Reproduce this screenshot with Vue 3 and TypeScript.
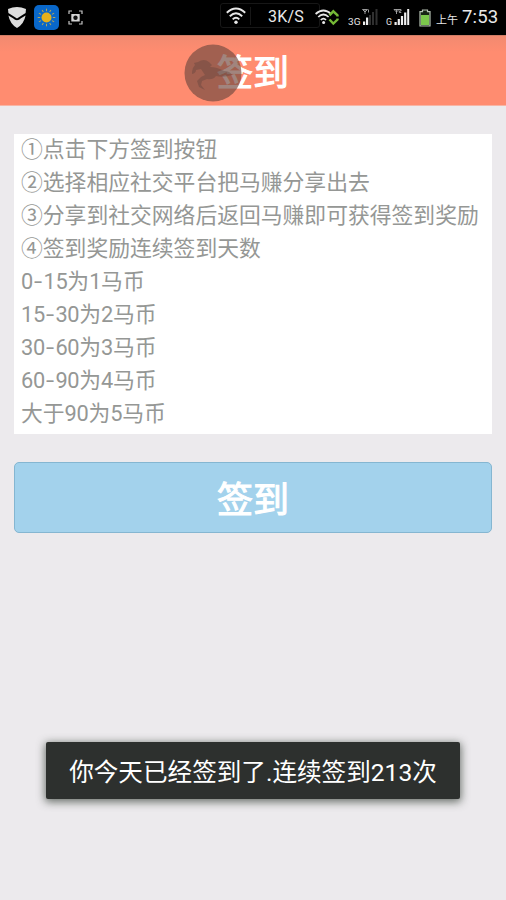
<script setup lang="ts">
const rules: string[] = [
  '①点击下方签到按钮',
  '②选择相应社交平台把马赚分享出去',
  '③分享到社交网络后返回马赚即可获得签到奖励',
  '④签到奖励连续签到天数',
  '0-15为1马币',
  '15-30为2马币',
  '30-60为3马币',
  '60-90为4马币',
  '大于90为5马币',
]
interface Part {
  text: string
  kind: string
}
const lines: Part[][] = rules.map((rule) =>
  rule
    .split(/(-|\d+)/)
    .filter((text) => text !== '')
    .map((text) => ({ text, kind: text === '-' ? 'dash' : /^\d/.test(text) ? 'num' : 'han' })),
)
const rays: number[] = Array.from({ length: 12 }, (_, i) => i * 30)
</script>

<template>
  <div class="screen">
    <div class="status">
      <svg class="shield" width="20" height="24" viewBox="0 0 20 24">
        <path d="M1 3Q10-1 19 3L18.600 7L10 12.500L1.400 7Z" fill="#dedede" />
        <path d="M1.400 9.500L6 12.200Q10 16.500 14 12.200L18.600 9.500Q17 18 10 22Q3 18 1.400 9.500Z" fill="#dedede" />
      </svg>
      <svg class="sun" width="25" height="25" viewBox="0 0 25 25">
        <rect width="25" height="25" rx="5" fill="#0967c9" />
        <g stroke="#b5a556" stroke-width="1">
          <line v-for="r in rays" :key="r" x1="12.500" y1="3.700" x2="12.500" y2="6.200" :transform="`rotate(${r} 12.500 12.500)`" />
        </g>
        <circle cx="12.500" cy="12.500" r="5" fill="#e5b01c" />
      </svg>
      <svg class="capture" width="15" height="15" viewBox="0 0 15 15" fill="none" stroke="#c5c5c5">
        <path d="M1 4V1H4M11 1H14V4M14 11V14H11M4 14H1V11" stroke-width="1.200" />
        <path d="M3.300 4H11.700V11.500H3.300Z" fill="#d5d5d5" stroke="none" />
        <circle cx="7.500" cy="7.700" r="2.200" fill="#111" stroke="none" />
      </svg>
      <div class="speed">
        <div class="speed-icon">
          <svg width="20" height="18" viewBox="0 0 20 18" fill="none" stroke="#e8e8e8" stroke-width="1.900">
            <path d="M.8 5.800Q10-2.600 19.200 5.800M3.800 9.300Q10 3.400 16.200 9.300M6.700 12.400Q10 9 13.300 12.400" />
            <circle cx="10" cy="15.300" r="1.700" fill="#e8e8e8" stroke="none" />
          </svg>
        </div>
        <span class="speed-text">3K/S</span>
      </div>
      <svg class="wifi" width="24" height="17" viewBox="0 0 24 17" fill="none">
        <path d="M.6 5Q8.500-2 16 5M3.200 8Q8.500 3 13.600 8M5.800 11Q8.500 8.300 11 11" stroke="#e8e8e8" stroke-width="1.700" />
        <circle cx="8.600" cy="13.600" r="1.500" fill="#e8e8e8" />
        <path d="M14.500 6.300L18.300 2.300L22.500 6.300V7.500M14.500 10.500L18.300 14.500L22.500 10.500V9.500" stroke="#75ba36" stroke-width="2.400" />
      </svg>
      <svg class="sig sig-a" width="30" height="18" viewBox="0 0 30 18">
        <text x="0" y="17" class="net" textLength="12.500" lengthAdjust="spacingAndGlyphs">3G</text>
        <path d="M14.500 1.500H19.500L17 4ZM17 1.500V6M20.500 1.500V4.500" class="ant" />
        <path d="M15 13.500h2.200V17H15ZM18 9.500h2.200V17H18Z" fill="#eee" />
        <path d="M21 7h2V17h-2ZM24 4h2V17h-2ZM27.500 1h2V17h-2Z" fill="#303030" />
      </svg>
      <svg class="sig sig-b" width="24" height="18" viewBox="0 0 24 18">
        <text x="0" y="17" class="net" textLength="6" lengthAdjust="spacingAndGlyphs">G</text>
        <path d="M8 1.500H13L10.500 4ZM10.500 1.500V6M13 1.500H15V3H13.300V4.500H15.300" class="ant" />
        <path d="M8.500 14h2.200V17H8.500ZM11.700 11h2.200V17h-2.200ZM14.900 8h2.200V17h-2.200ZM18.100 4.500h2.200V17h-2.200ZM21.200 1h2V17h-2Z" fill="#eee" />
      </svg>
      <svg class="battery" width="12" height="18" viewBox="0 0 12 18">
        <path d="M3.500 1H8.500V2.700H11V17H1V2.700H3.500Z" fill="#162314" stroke="#b5c0b2" stroke-width="1.200" />
        <path d="M2 6H10V16H2Z" fill="#7bc74b" />
      </svg>
      <span class="ampm">上午</span>
      <span class="clock">7:53</span>
    </div>

    <header class="header">
      <h1 class="heading">签到</h1>
      <svg class="bubble" width="58" height="58" viewBox="0 0 58 58">
        <circle cx="29" cy="29" r="28.500" fill="#754b41" fill-opacity=".68" />
        <path d="M8 28Q8 24 11 21L10 19L14 18Q20 14 25 18L28 21L26 23Q33 23 40 27Q46 27 48 31Q40 34 32 32Q29 36 23 35L18 37L17 41L21 46L15 43L13 37L17 33L21 31L17 25L12 26Q12 29 8 30Z" fill="#554039" fill-opacity=".35" />
      </svg>
    </header>

    <main class="content">
      <section class="card">
        <p v-for="(line, i) in lines" :key="i" class="rule"><span v-for="(part, j) in line" :key="j" :class="part.kind">{{ part.text }}</span></p>
      </section>
      <button class="sign" type="button">签到</button>
    </main>

    <div class="toast">你今天已经签到了.连续签到213次</div>
  </div>
</template>

<style>
body {
  margin: 0;
  background: #eceaed;
}
</style>

<style scoped>
.screen {
  position: relative;
  width: 506px;
  height: 900px;
  overflow: hidden;
  background: #eceaed;
  font-family: Roboto, "Noto Sans CJK SC", sans-serif;
}
.status {
  display: flex;
  align-items: flex-start;
  box-sizing: border-box;
  height: 35px;
  background: #000;
  color: #e9e9e9;
}
.status > * {
  flex: none;
}
.shield {
  margin: 6px 0 0 7px;
}
.sun {
  margin: 5px 0 0 7px;
}
.capture {
  margin: 10px 0 0 9px;
}
.speed {
  display: flex;
  align-items: center;
  box-sizing: border-box;
  width: 100px;
  height: 25px;
  margin: 3px 0 0 137px;
  border: 1px solid #171717;
  border-radius: 3px;
}
.speed-icon {
  display: flex;
  align-items: center;
  width: 30px;
  height: 18px;
  padding-left: 5px;
  box-sizing: border-box;
  border-right: 1px solid #171717;
}
.speed-text {
  margin-left: 17px;
  padding-top: 2px;
  font-size: 16px;
  line-height: 23px;
  letter-spacing: 0.2px;
}
.wifi {
  margin: 9px 0 0 -5px;
}
.sig {
  margin-top: 8px;
}
.sig-a {
  margin-left: 9px;
}
.sig-b {
  margin-left: 8px;
}
.net {
  fill: #e4e4e4;
  font-family: Roboto, sans-serif;
  font-size: 8.500px;
}
.ant {
  fill: none;
  stroke: #aaa;
  stroke-width: 0.9;
}
.battery {
  margin: 9px 0 0 9px;
}
.ampm {
  margin: 11px 0 0 5px;
  font-size: 11px;
  line-height: 20px;
}
.clock {
  margin: 5px 0 0 4px;
  font-size: 18.500px;
  line-height: 24px;
  letter-spacing: 0.2px;
}
.header {
  position: relative;
  display: flex;
  justify-content: center;
  box-sizing: border-box;
  height: 71px;
  padding-top: 11px;
  border-top: 1px solid #cf7d66;
  border-bottom: 1px solid #f7b5a5;
  background: linear-gradient(#f28a70, #ff8c70 16px);
}
.heading {
  margin: 0;
  color: #fff;
  font-size: 36px;
  font-weight: 400;
  line-height: 54px;
  -webkit-text-stroke: 1.1px #fff;
}
.bubble {
  position: absolute;
  top: 8px;
  left: 184px;
}
.content {
  display: flex;
  flex-direction: column;
  gap: 28px;
  padding: 28px 14px 0;
}
.card {
  box-sizing: border-box;
  height: 300px;
  padding: 0 7px;
  background: #fff;
}
.rule {
  margin: 0;
  color: #959795;
  font-size: 21.800px;
  line-height: 33px;
  white-space: nowrap;
}
.rule:first-child {
  margin-top: -1px;
}
.num {
  letter-spacing: -0.3px;
}
.dash {
  display: inline-block;
  width: 9.500px;
  margin: 0 0.300px 0 0.700px;
  line-height: 1;
  transform: scaleX(1.35);
  transform-origin: left;
}
.card {
  display: flow-root;
}
.sign {
  box-sizing: border-box;
  width: 100%;
  height: 71px;
  padding: 7px 0 0;
  border: 1px solid #85b6d1;
  border-radius: 5px;
  background: #a3d2ec;
  color: #fff;
  font-family: inherit;
  font-size: 36px;
  font-weight: 400;
  line-height: 62px;
  -webkit-text-stroke: 1.1px #fff;
}
.toast {
  position: absolute;
  top: 742px;
  left: 46px;
  box-sizing: border-box;
  width: 414px;
  height: 57px;
  padding-top: 2px;
  border-radius: 2px;
  background: #2d302e;
  box-shadow: 0 2px 9px 1px rgba(50, 60, 50, 0.7);
  color: #fff;
  font-size: 24.600px;
  line-height: 57px;
  text-align: center;
  white-space: nowrap;
}
</style>
